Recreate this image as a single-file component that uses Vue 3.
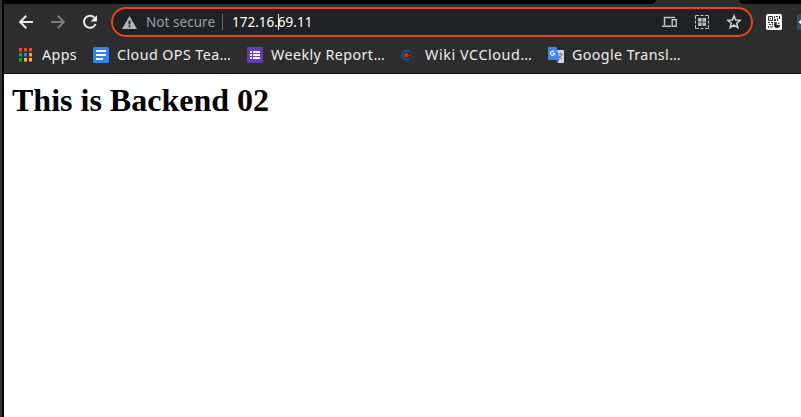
<script setup>
const bookmarks = [
  { label: 'Apps', icon: 'apps', width: 75, spacing: 0.35 },
  { label: 'Cloud OPS Tea…', icon: 'doc', width: 154, spacing: 0.42 },
  { label: 'Weekly Report…', icon: 'form', width: 153, spacing: 0.42 },
  { label: 'Wiki VCCloud…', icon: 'wiki', width: 148, spacing: 0.6 },
  { label: 'Google Transl…', icon: 'translate', width: 150, spacing: 0.38 },
]
const appColors = ['#f44336', '#f44336', '#f44336', '#0f9d58', '#1e88e5', '#ffa726', '#0f9d58', '#fbb03b', '#fbb03b']
</script>

<template>
  <div class="window">
    <header class="chrome">
      <div class="tabstrip">
        <div class="tab-left"></div>
        <div class="tab-right"></div>
      </div>
      <div class="toolbar">
        <svg class="nav" viewBox="0 0 16 16"><path d="M15 8H2.5M8.3 1.8 2.1 8l6.2 6.2" fill="none" stroke="#e8e8e8" stroke-width="2" /></svg>
        <svg class="nav" viewBox="0 0 16 16"><path d="M1 8h12.5M7.7 1.8 13.9 8l-6.2 6.2" fill="none" stroke="#7c7c7c" stroke-width="2" /></svg>
        <svg class="nav" viewBox="0 0 16 16"><path d="M13.6 10A6 6 0 1 1 12.5 3.8" fill="none" stroke="#e8e8e8" stroke-width="2" /><path d="M15 1v6.4H8.6z" fill="#e8e8e8" /></svg>
        <div class="omnibox">
          <svg class="warning" viewBox="0 0 15 13"><path d="M7.5 0 15 13H0z" fill="#b4b7ba" /><path d="M6.6 4.5h1.8v4H6.6zM6.6 9.5h1.8v1.7H6.6z" fill="#202124" /></svg>
          <span class="secure">Not secure</span>
          <span class="divider"></span>
          <span class="url">172.16.<i class="caret"></i>69.11</span>
          <svg class="devices" viewBox="0 0 16 12"><path d="M2.5 9V1.5H13M0 10.2h9" fill="none" stroke="#bdc1c6" stroke-width="1.5" /><path d="M10.2 3.7h4.1v6.6h-4.1z" fill="none" stroke="#bdc1c6" stroke-width="1.4" /></svg>
          <svg class="qr" viewBox="0 0 14 14"><path d="M.5 4V.5H4M10 .5h3.5V4M13.5 10v3.5H10M4 13.5H.5V10M5.5.5h3M5.5 13.5h3M.5 5.5v3M13.5 5.5v3" fill="none" stroke="#bdc1c6" /><path d="M3 3h3.7v3.7H3zM7.4 3h3.7v3.7H7.4zM3 7.4h3.7v3.7H3zM7.4 7.4h3.7v3.7H7.4z" fill="#b6b9bd" /></svg>
          <svg class="star" viewBox="0 0 16 16"><path d="m8 1.8 1.65 4.25 4.55.28-3.5 2.92 1.15 4.43L8 11.22l-3.85 2.46L5.3 9.25 1.8 6.33l4.55-.28z" fill="none" stroke="#d3d5d8" stroke-width="1.5" /></svg>
        </div>
        <svg class="ext" viewBox="0 0 16 16">
          <rect width="16" height="16" rx="1.5" fill="#f5f5f5" />
          <path d="M2.5 2.5h4v4h-4z" fill="none" stroke="#333" />
          <path d="M4 4h1v1H4zM8 2h1v2H8zM10 2h2v1h-2zM13 2h1v3h-1zM8 5h2v2H8zM11 4h1v3h-1zM2 8h2v1H2zM5 8h2v1H5zM3 10h2v1H3zM6 9.5h1v2H6zM2 12h1v2H2zM4 12.5h3v1H4zM8 8h1v1H8z" fill="#333" />
          <path d="M10.8 8v3H14a3 3 0 1 1-3.2-3z" fill="#222" /><path d="M12 8.2V10h1.8A2 2 0 0 0 12 8.2z" fill="#555" />
        </svg>
        <svg class="edge" viewBox="0 0 4 16"><path d="M0 1.5Q0 0 1.5 0H4v16H1.5Q0 16 0 14.5z" fill="#315063" /><path d="M1.5 8 4 5.8v4.4z" fill="#fff" /></svg>
      </div>
      <nav class="bookmarks">
        <div v-for="b in bookmarks" :key="b.icon" class="bookmark" :style="{ width: b.width + 'px' }">
          <svg v-if="b.icon === 'apps'" class="favicon" viewBox="0 0 16 16">
            <g v-for="(c, i) in appColors" :key="i">
              <rect :x="1 + (i % 3) * 5" :y="1 + Math.floor(i / 3) * 5" width="3" height="3" :fill="c" />
              <rect :x="1 + (i % 3) * 5" :y="4 + Math.floor(i / 3) * 5" width="3" height="1" :fill="c" opacity=".5" />
            </g>
          </svg>
          <svg v-else-if="b.icon === 'doc'" class="favicon" viewBox="0 0 16 16"><rect width="16" height="16" rx="1.5" fill="#2d84f0" /><path d="M3 4h10M3 8h10M3 12h7" stroke="#fff" stroke-width="2" /></svg>
          <svg v-else-if="b.icon === 'form'" class="favicon" viewBox="0 0 16 16"><rect width="16" height="16" rx="1" fill="#673ab7" /><path d="M3 5h2M3 8h2M3 11h2M6 5h7M6 8h7M6 11h7" stroke="#fff" stroke-width="2" /></svg>
          <svg v-else-if="b.icon === 'wiki'" class="favicon wiki" viewBox="0 0 16 16"><path d="M9.4 4.6A4.5 4.5 0 1 0 9.4 11.8" fill="none" stroke="#07639b" stroke-width="1.7" /><circle cx="6.2" cy="8.2" r="2.2" fill="#d9301a" /><path d="M9.3 7.4h1.5v1.5H9.3zM11 4.8h1.3v1.3H11zM10.7 10h1.3v1.3h-1.3zM13 8.8h1.3V10H13z" fill="#a82d20" /><path d="M14.5 7.8h1v1h-1z" fill="#6b2b25" /></svg>
          <svg v-else class="favicon" viewBox="0 0 16 16"><path d="M6 3h9q1 0 1 1v11q0 1-1 1H10z" fill="#d6d9dc" /><path d="M9.8 7h5M12.3 5.5V7M14 7q-.8 3-3.2 4.2M10.8 8.5q1.2 2 3.2 3.5" fill="none" stroke="#697b84" stroke-width="1" /><path d="m8 13 3 0-1.5 3z" fill="#3f51c8" /><path d="M1 0h7.5l3.2 13H1q-1 0-1-1V1q0-1 1-1z" fill="#4086f4" /><path d="M6.2 4.9A2.1 2.1 0 1 0 6.7 6.5H4.8" fill="none" stroke="#fff" stroke-width="1.1" /></svg>
          <span :style="{ letterSpacing: b.spacing + 'px' }">{{ b.label }}</span>
        </div>
      </nav>
    </header>
    <main><h1>This is Backend 02</h1></main>
  </div>
</template>

<style>
body { margin: 0; overflow: hidden; }
</style>
<style scoped>
.window { box-sizing: border-box; width: 801px; height: 417px; border-left: 2px solid #333; background: #fff; }
.window::before { content: ''; float: left; width: 2px; height: 417px; background: #000; }
.chrome { margin-left: 2px; height: 74px; box-sizing: border-box; background: #2d2d2d; border-bottom: 1px solid #171717; font-family: "Noto Sans", sans-serif; }
.tabstrip { height: 4px; display: flex; justify-content: space-between; }
.tab-left { width: 652px; background: #000; border-bottom-right-radius: 5px 4px; }
.tab-right { width: 62px; background: #000; border-bottom-left-radius: 5px 4px; }
.toolbar { height: 36px; display: flex; align-items: center; padding-left: 14px; box-sizing: border-box; overflow: hidden; }
.nav { width: 16px; height: 16px; margin-right: 16px; flex: none; }
.omnibox { width: 642px; height: 30px; flex: none; box-sizing: border-box; border: 2px solid #e8451f; border-radius: 15px; background: #202124; display: flex; align-items: center; padding-left: 10px; margin-left: -3px; }
.warning { width: 15px; height: 13px; margin-left: -1px; flex: none; }
.secure { color: #9aa0a6; font-size: 13.5px; line-height: 18px; margin-left: 9px; width: 76px; white-space: nowrap; letter-spacing: 0.05px; }
.divider { width: 1px; height: 16px; background: #666a6e; }
.url { color: #fff; font-size: 13.5px; line-height: 18px; margin-left: 9px; width: 430px; white-space: nowrap; }
.caret { display: inline-block; width: 1px; height: 16px; margin-right: -1px; vertical-align: -3px; background: #fff; }
.devices { width: 16px; height: 12px; margin-right: 17px; flex: none; }
.qr { width: 14px; height: 14px; margin-right: 17px; flex: none; }
.star { width: 16px; height: 16px; flex: none; }
.ext { width: 16px; height: 16px; margin-left: 13px; flex: none; }
.edge { width: 4px; height: 16px; margin-left: 15px; flex: none; }
.bookmarks { height: 30px; display: flex; align-items: center; padding-left: 14px; }
.bookmark { display: flex; align-items: center; flex: none; color: #eee; font-size: 14.3px; line-height: 20px; white-space: nowrap; }
.favicon { width: 16px; height: 16px; margin-right: 8px; flex: none; }
.wiki { margin-right: 9px; }
main { padding: 8px 0 0 10px; }
h1 { margin: 0; font: bold 32px/37px "Liberation Serif", serif; color: #000; }
</style>
